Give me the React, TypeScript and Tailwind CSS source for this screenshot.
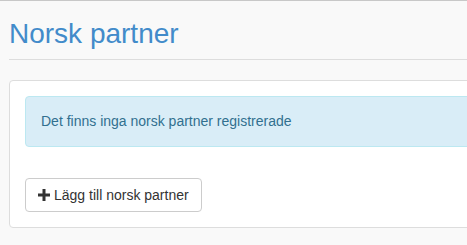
export default function App() {
  return (
    <div className="h-[245px] w-[467px] overflow-hidden border-t border-[#c8c8c8] bg-[#f9f9f9] pl-[9px] font-['Liberation_Sans',Arial,sans-serif]">
      <h1 className="mt-[17px] text-[28px] leading-[32px] text-[#428bca]">Norsk partner</h1>
      <div className="mt-[9px] -mr-8 border-t border-[#ddd]" />
      <div className="mt-[20px] -mr-8 rounded-[4px] border border-[#ddd] bg-white p-[15px]">
        <div className="rounded-[4px] border border-[#bce8f1] bg-[#d9edf7] px-[15px] py-[15px] text-[14px] leading-[19px] text-[#31708f]">
          Det finns inga norsk partner registrerade
        </div>
        <button className="mt-[31px] flex h-[34px] items-center gap-[4px] rounded-[4px] border border-[#ccc] bg-white px-[12px] text-[14px] text-[#333]">
          <svg width="12" height="12" viewBox="0 0 12 12" aria-hidden>
            <path d="M4.5 0h3v4.5H12v3H7.5V12h-3V7.5H0v-3h4.5z" fill="#333" />
          </svg>
          Lägg till norsk partner
        </button>
      </div>
    </div>
  )
}
